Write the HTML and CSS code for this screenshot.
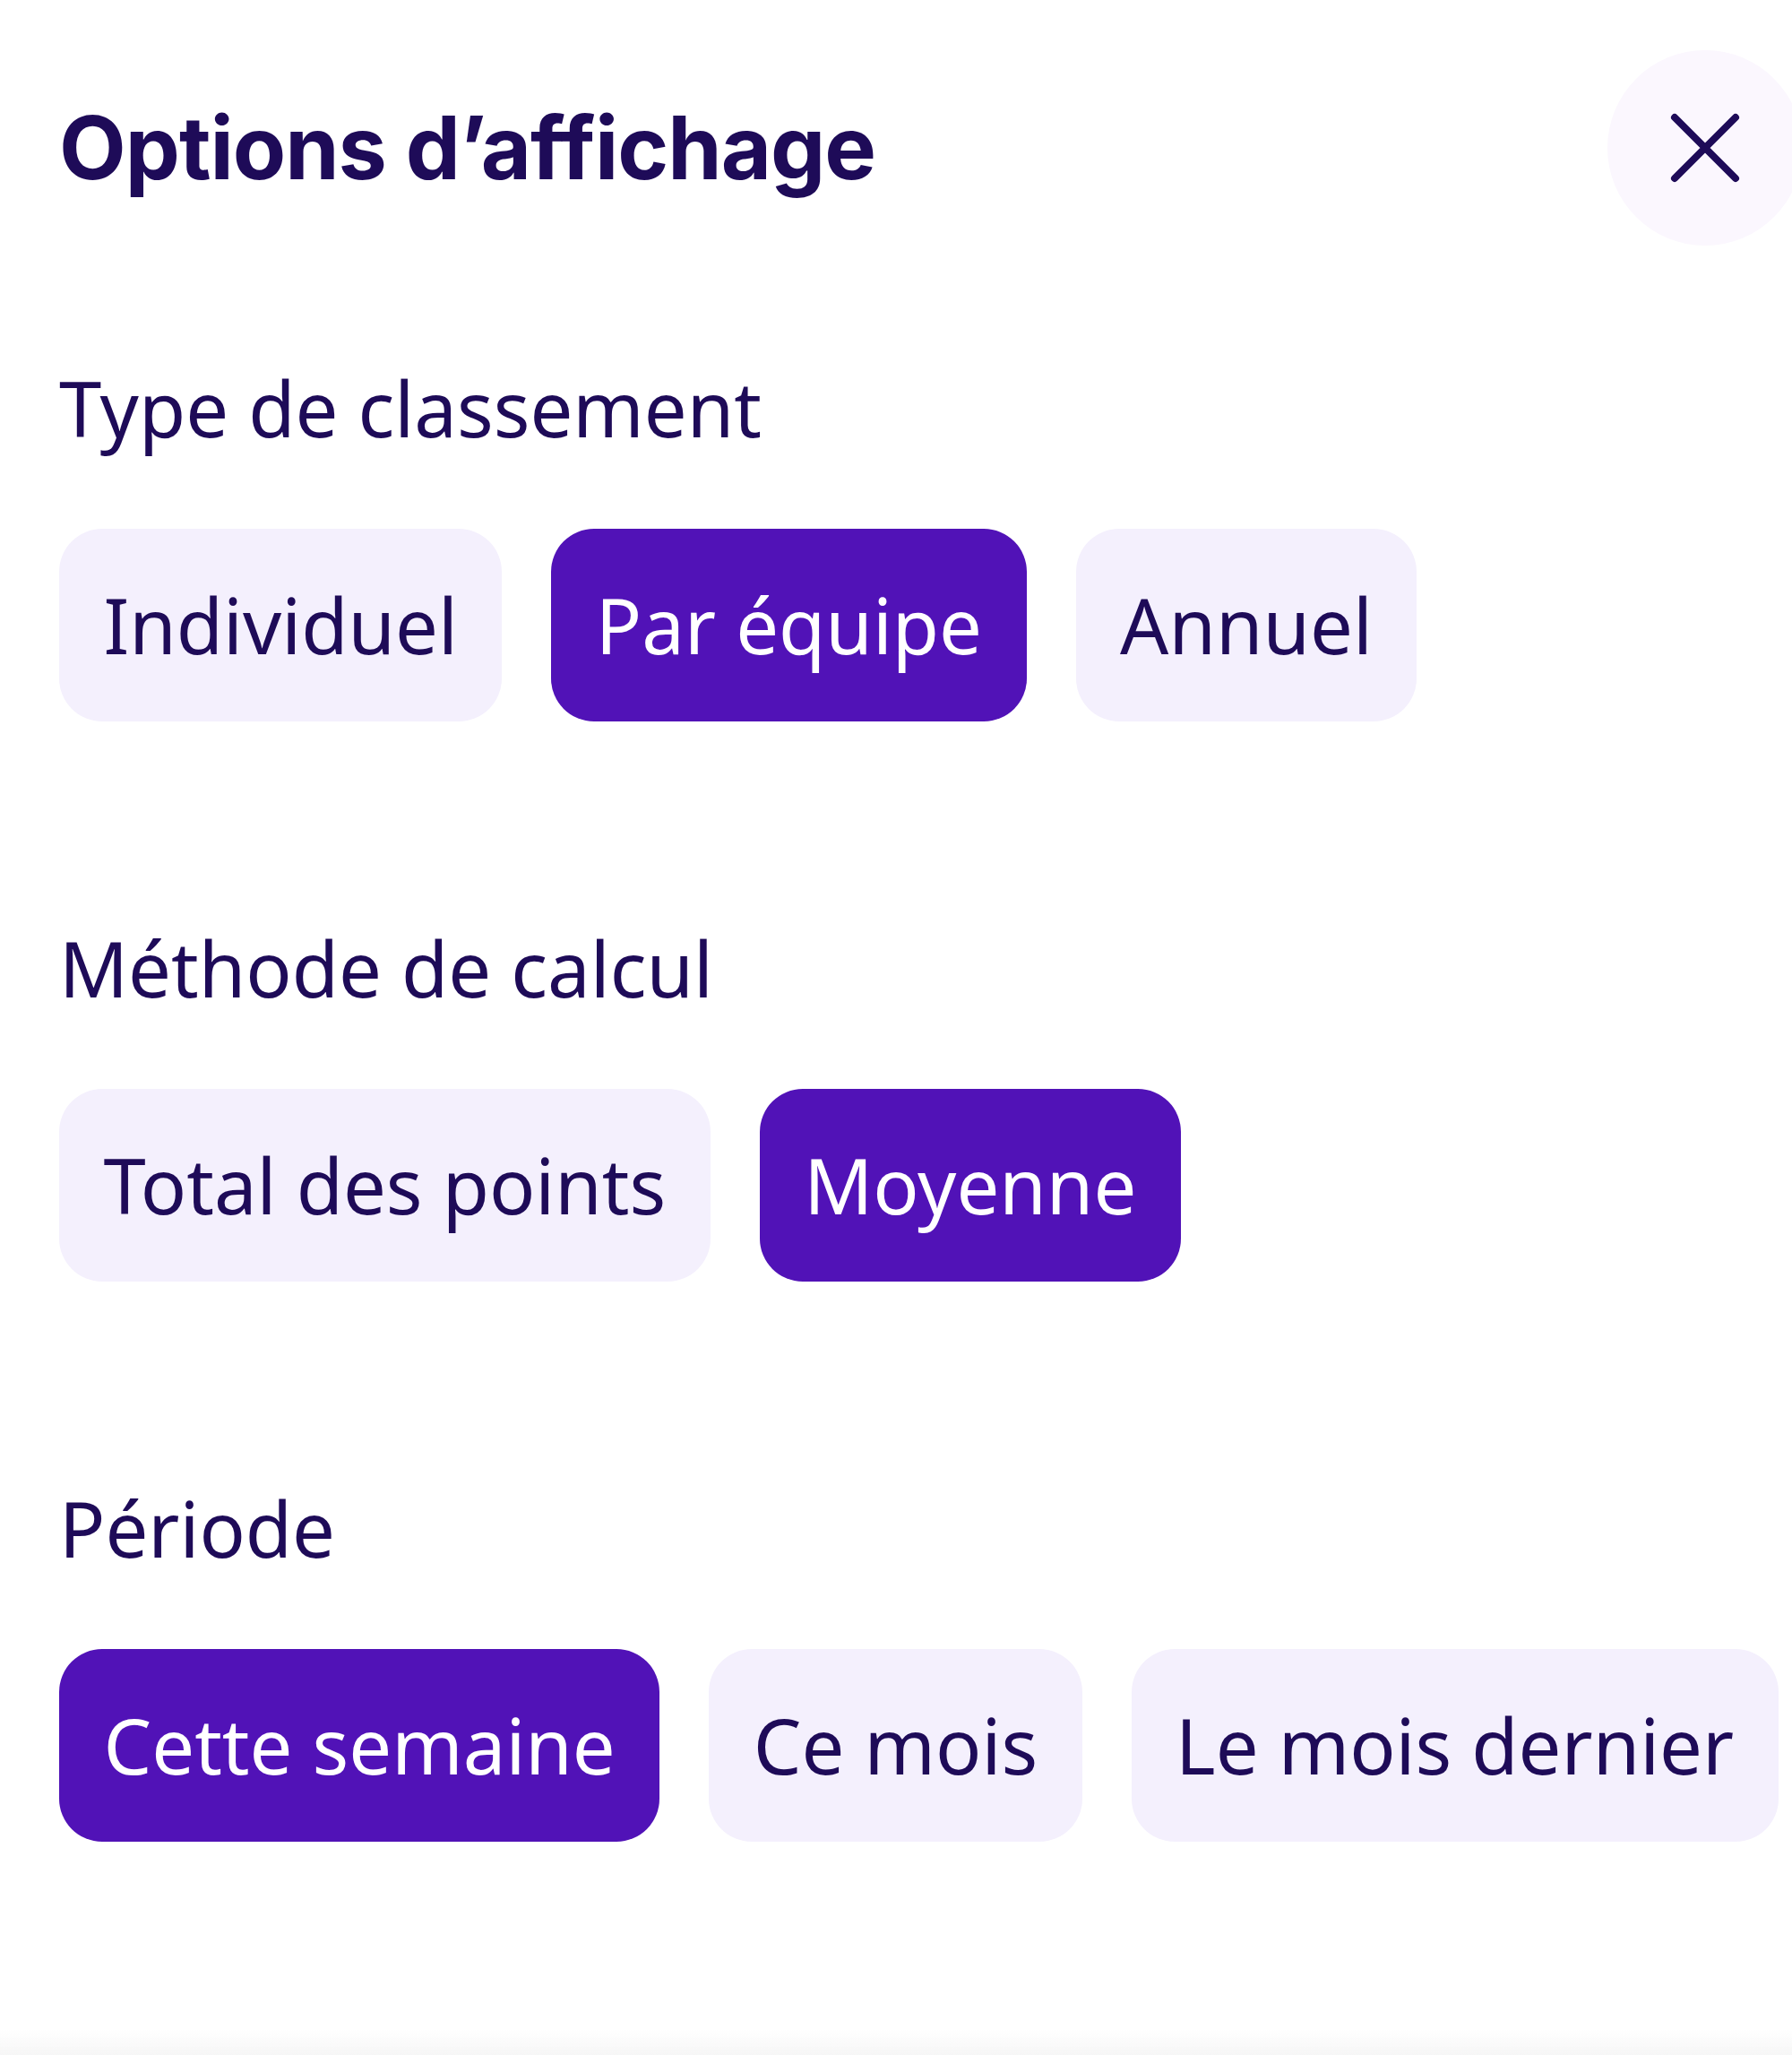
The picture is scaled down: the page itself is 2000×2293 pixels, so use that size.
FILE: index.html
```html
<!DOCTYPE html>
<html lang="fr">
<head>
<meta charset="utf-8">
<title>Options d’affichage</title>
<link rel="stylesheet" href="styles.css">
</head>
<body>
<div class="panel">
  <header class="header">
    <h1 class="title">Options d’affichage</h1>
    <button class="close" aria-label="Fermer">
      <svg width="78" height="78" viewBox="0 0 78 78" fill="none">
        <path d="M5 5 L73 73 M73 5 L5 73" stroke="#1e0b58" stroke-width="8" stroke-linecap="round"/>
      </svg>
    </button>
  </header>
  <div class="sections">
    <section class="group">
      <h2 class="label">Type de classement</h2>
      <div class="chips">
        <button class="chip">Individuel</button>
        <button class="chip active">Par équipe</button>
        <button class="chip">Annuel</button>
      </div>
    </section>
    <section class="group">
      <h2 class="label">Méthode de calcul</h2>
      <div class="chips">
        <button class="chip">Total des points</button>
        <button class="chip active">Moyenne</button>
      </div>
    </section>
    <section class="group">
      <h2 class="label">Période</h2>
      <div class="chips">
        <button class="chip active">Cette semaine</button>
        <button class="chip">Ce mois</button>
        <button class="chip">Le mois dernier</button>
      </div>
    </section>
  </div>
</div>
<div class="bottom-fade"></div>
</body>
</html>
```
FILE: styles.css
```css
html, body {
  margin: 0;
  padding: 0;
  background: #ffffff;
}
body {
  width: 2000px;
  min-height: 2293px;
  overflow: hidden;
  font-family: "Noto Sans", "Open Sans", sans-serif;
  color: #1e0b58;
}
.panel {
  padding: 56px 0 0 66px;
}
.header {
  display: flex;
  align-items: center;
  justify-content: space-between;
  height: 218px;
}
.title {
  margin: 0;
  font-family: Inter, "Noto Sans", sans-serif;
  font-weight: 700;
  font-size: 97px;
  line-height: 118px;
  letter-spacing: -1px;
  color: #1e0b58;
}
.close {
  width: 218px;
  height: 218px;
  margin-right: -12px;
  border: none;
  border-radius: 50%;
  background: #fbf7fe;
  display: flex;
  align-items: center;
  justify-content: center;
  padding: 0;
  flex-shrink: 0;
}
.sections {
  display: flex;
  flex-direction: column;
  gap: 217px;
  padding-top: 123px;
}
.label {
  margin: 0 0 77px 0;
  font-family: "Noto Sans", "Open Sans", sans-serif;
  font-weight: 400;
  font-size: 85px;
  line-height: 116px;
  color: #1e0b58;
}
.chips {
  display: flex;
  gap: 55px;
}
.chip {
  font-family: "Noto Sans", "Open Sans", sans-serif;
  font-size: 85px;
  line-height: 115px;
  padding: 50px 49.5px;
  border: none;
  border-radius: 48px;
  background: #f4f0fd;
  color: #1e0b58;
  white-space: nowrap;
}
.chip.active {
  background: #5112b7;
  color: #ffffff;
}
.bottom-fade {
  position: fixed;
  left: 0;
  right: 0;
  bottom: 0;
  height: 28px;
  background: linear-gradient(to bottom, rgba(245,245,245,0), #f6f6f6);
}
```
